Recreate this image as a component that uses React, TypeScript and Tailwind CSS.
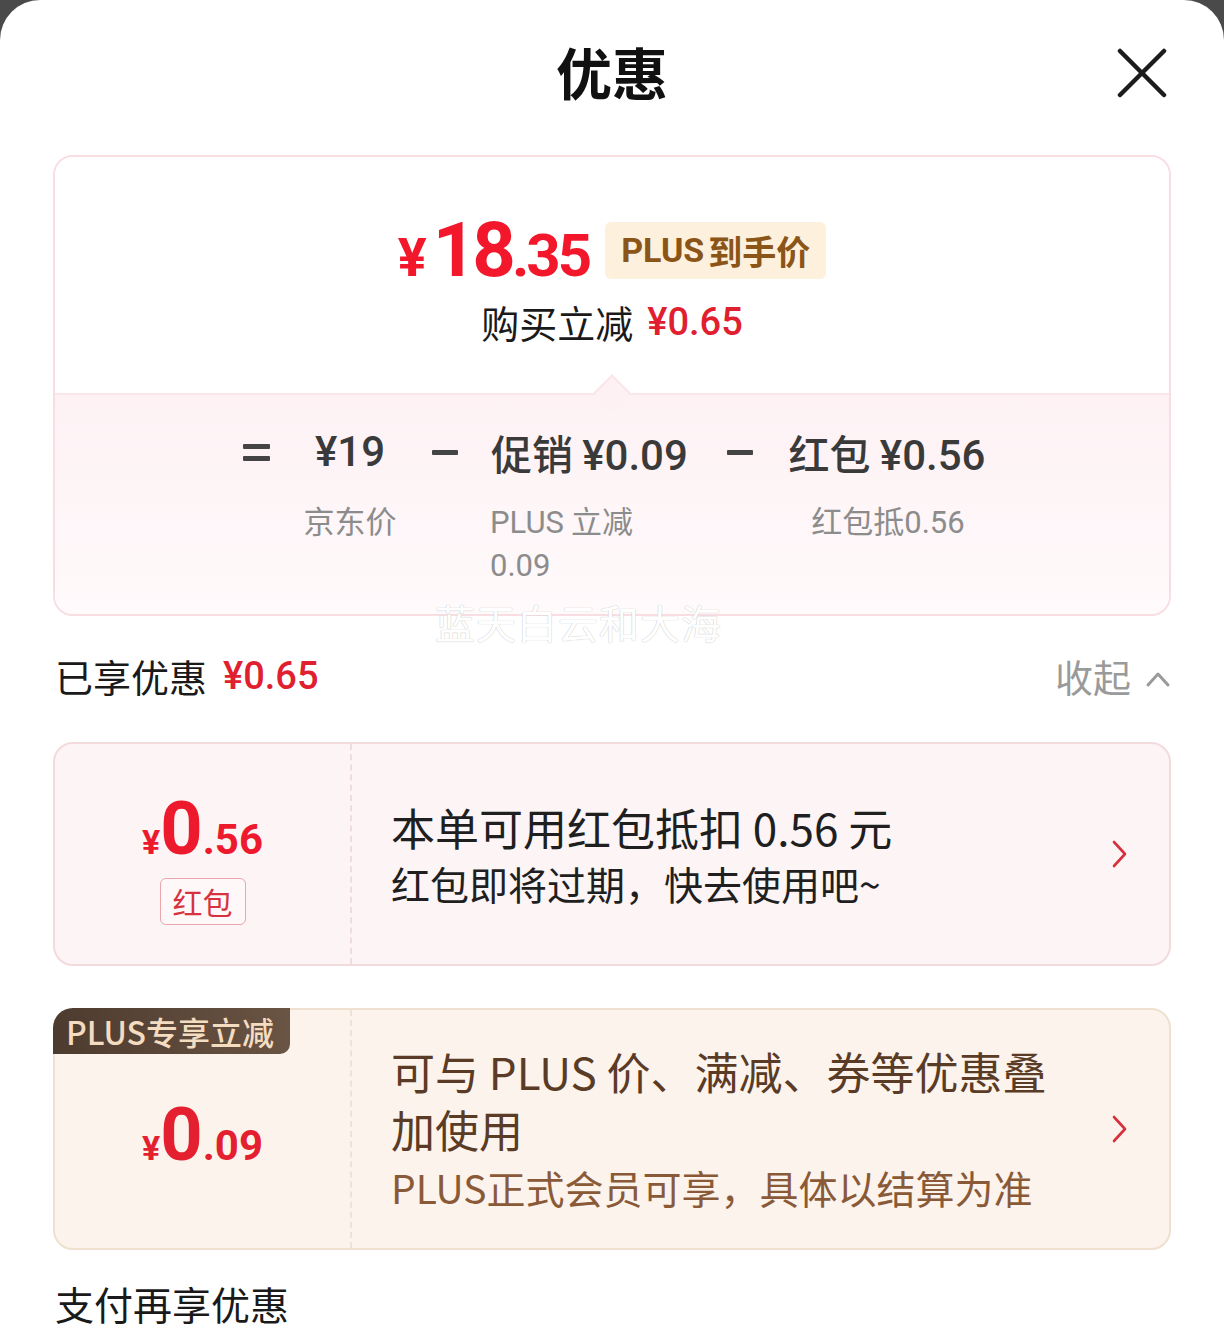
import React from "react";

const CJK = '"Noto Sans CJK SC", "Noto Sans", sans-serif';
const NUM = 'Roboto, "Noto Sans CJK SC", sans-serif';

function Chevron() {
  return (
    <svg width="16" height="28" viewBox="0 0 16 28" className="shrink-0">
      <polyline points="2,2 13,14 2,26" fill="none" stroke="#d7303d" strokeWidth="2.6" strokeLinecap="round" strokeLinejoin="round" />
    </svg>
  );
}

function Bar({ w }: { w: number }) {
  return <div className="h-[5px] bg-[#444] rounded-[1px]" style={{ width: w }} />;
}

export default function App() {
  return (
    <div className="w-[1224px] h-[1339px] bg-[#4a4a4a] overflow-hidden" style={{ fontFamily: CJK }}>
      <div className="relative w-full h-full bg-white rounded-t-[40px] overflow-hidden">
        {/* header */}
        <div className="relative h-[146px] flex items-center justify-center">
          <div className="text-[56px] font-bold text-[#111] leading-none -mt-[4px]">优惠</div>
          <svg className="absolute right-[57px] top-[48px]" width="50" height="50" viewBox="0 0 50 50">
            <line x1="3" y1="3" x2="47" y2="47" stroke="#1c1c1c" strokeWidth="4.5" strokeLinecap="round" />
            <line x1="47" y1="3" x2="3" y2="47" stroke="#1c1c1c" strokeWidth="4.5" strokeLinecap="round" />
          </svg>
        </div>

        {/* summary card */}
        <div className="mx-[53px] mt-[9px] border-2 border-[#f8dde2] rounded-[20px] overflow-hidden">
          <div className="h-[236px] flex flex-col items-center pt-[61px] bg-white">
            <div className="flex items-center h-[64px]">
              <div className="flex items-baseline text-[#f2172b] font-bold leading-none" style={{ fontFamily: NUM }}>
                <span className="text-[54px] mr-[6px]">¥</span>
                <span className="text-[76px] tracking-[-4px]">18</span>
                <span className="text-[60px] tracking-[-3px]">.35</span>
              </div>
              <div className="ml-[16px] h-[57px] px-[16px] flex items-center rounded-[6px] bg-[#fdf0dd] text-[#8a5517] text-[34px] font-bold">
                <span style={{ fontFamily: NUM }}>PLUS</span>
                <span className="ml-[4px]">到手价</span>
              </div>
            </div>
            <div className="mt-[18px] flex items-center h-[44px] leading-none">
              <span className="text-[38px] text-[#1a1a1a]">购买立减</span>
              <span className="ml-[14px] text-[38px] font-medium text-[#e0202f]" style={{ fontFamily: NUM }}>¥0.65</span>
            </div>
          </div>
          <div className="relative h-[221px] border-t-2 border-[#fae6ea] bg-gradient-to-b from-[#fdf1f4] to-[#fffafb]">
            <div className="absolute left-1/2 -top-[15px] -ml-[14px] w-[28px] h-[28px] rotate-45 bg-[#fdf1f4] border-t-2 border-l-2 border-[#fae6ea]" />
            <div className="flex items-start pt-[33px]">
              <div className="ml-[188px] w-[27px] h-[48px] flex flex-col justify-center gap-[7px]">
                <Bar w={27} />
                <Bar w={27} />
              </div>
              <div className="ml-[10px] w-[140px] flex flex-col items-center">
                <div className="h-[48px] leading-[48px] text-[42px] font-medium text-[#3a3a3a]" style={{ fontFamily: NUM }}>¥19</div>
              </div>
              <div className="ml-[12px] w-[26px] h-[48px] flex items-center"><Bar w={26} /></div>
              <div className="ml-[33px] w-[205px] flex flex-col items-start">
                <div className="h-[48px] leading-[48px] text-[41px] font-medium text-[#3a3a3a] whitespace-nowrap">
                  促销 <span className="text-[42px]" style={{ fontFamily: NUM }}>¥0.09</span>
                </div>
              </div>
              <div className="ml-[31px] w-[26px] h-[48px] flex items-center"><Bar w={26} /></div>
              <div className="ml-[34px] w-[200px] flex flex-col items-center">
                <div className="h-[48px] leading-[48px] text-[41px] font-medium text-[#3a3a3a] whitespace-nowrap">
                  红包 <span className="text-[42px]" style={{ fontFamily: NUM }}>¥0.56</span>
                </div>
              </div>
            </div>
            <div className="flex items-start mt-[24px] text-[31px] leading-[40px] text-[#8c8c8c]">
              <div className="ml-[225px] w-[140px] text-center">京东价</div>
              <div className="ml-[70px] w-[160px] text-left">
                <span style={{ fontFamily: NUM }}>PLUS</span> 立减 <span style={{ fontFamily: NUM }}>0.09</span>
              </div>
              <div className="ml-[138px] w-[200px] text-center">
                红包抵<span style={{ fontFamily: NUM }}>0.56</span>
              </div>
            </div>
          </div>
        </div>

        {/* watermark */}
        <div className="absolute left-[435px] top-[600px] text-[40px] leading-[44px] text-white tracking-[1px] pointer-events-none" style={{ textShadow: "0 0 1px #c8c8c8, 0 0 1px #c8c8c8" }}>
          蓝天白云和大海
        </div>

        {/* enjoyed row */}
        <div className="mx-[53px] mt-[38px] h-[44px] flex items-center justify-between">
          <div className="flex items-center leading-none pl-[2px]">
            <span className="text-[38px] text-[#1a1a1a]">已享优惠</span>
            <span className="ml-[16px] text-[38px] font-medium text-[#e0202f]" style={{ fontFamily: NUM }}>¥0.65</span>
          </div>
          <div className="flex items-center">
            <span className="text-[38px] text-[#9a9a9a] leading-none">收起</span>
            <svg className="ml-[14px] mt-[6px]" width="26" height="18" viewBox="0 0 26 18">
              <polyline points="3,15 13,4 23,15" fill="none" stroke="#9a9a9a" strokeWidth="3" strokeLinecap="round" strokeLinejoin="round" />
            </svg>
          </div>
        </div>

        {/* red packet card */}
        <div className="mx-[53px] mt-[44px] h-[224px] border-2 border-[#f3dadd] rounded-[20px] bg-[#fcf4f5] flex">
          <div className="w-[297px] shrink-0 border-r-2 border-dashed border-[#efdcdf] flex flex-col items-center pt-[48px]">
            <div className="flex items-baseline text-[#ed1a2d] font-bold leading-none" style={{ fontFamily: NUM }}>
              <span className="text-[34px]">¥</span>
              <span className="text-[74px]">0</span>
              <span className="text-[42px]">.56</span>
            </div>
            <div className="mt-[12px] h-[47px] w-[86px] border border-[#eaa5ad] rounded-[6px] bg-[#fff8f8] flex items-center justify-center text-[30px] text-[#d6323f]">
              红包
            </div>
          </div>
          <div className="flex-1 flex items-center pl-[39px] pr-[41px]">
            <div className="flex-1 flex flex-col">
              <div className="text-[44px] leading-[57px] text-[#1f1f1f]">本单可用红包抵扣 0.56 元</div>
              <div className="text-[39px] leading-[54px] text-[#1f1f1f]">红包即将过期，快去使用吧~</div>
            </div>
            <Chevron />
          </div>
        </div>

        {/* plus card */}
        <div className="relative mx-[53px] mt-[42px] h-[242px] border-2 border-[#efe0cf] rounded-[20px] bg-[#fbf3ec] flex">
          <div className="absolute -left-[2px] -top-[2px] h-[46px] w-[237px] rounded-tl-[20px] rounded-br-[10px] bg-gradient-to-r from-[#4d3b2f] to-[#6a5443] flex items-center pl-[13px] text-[32px] text-[#f4dcc1] font-medium leading-none">
            PLUS专享立减
          </div>
          <div className="w-[297px] shrink-0 border-r-2 border-dashed border-[#eee2d6] flex flex-col items-center pt-[88px]">
            <div className="flex items-baseline text-[#e41f2f] font-bold leading-none" style={{ fontFamily: NUM }}>
              <span className="text-[34px]">¥</span>
              <span className="text-[74px]">0</span>
              <span className="text-[42px]">.09</span>
            </div>
          </div>
          <div className="flex-1 flex items-center pl-[39px] pr-[41px]">
            <div className="flex-1 flex flex-col">
              <div className="w-[672px] text-[44px] leading-[58px] text-[#5a3b25]">
                可与 PLUS 价、满减、券等优惠叠加使用
              </div>
              <div className="text-[39px] leading-[58px] text-[#8a5a38]">PLUS正式会员可享，具体以结算为准</div>
            </div>
            <Chevron />
          </div>
        </div>

        {/* pay again */}
        <div className="mx-[53px] mt-[29px] h-[48px] flex items-center text-[39px] text-[#1a1a1a] pl-[2px]">
          支付再享优惠
        </div>
      </div>
    </div>
  );
}
